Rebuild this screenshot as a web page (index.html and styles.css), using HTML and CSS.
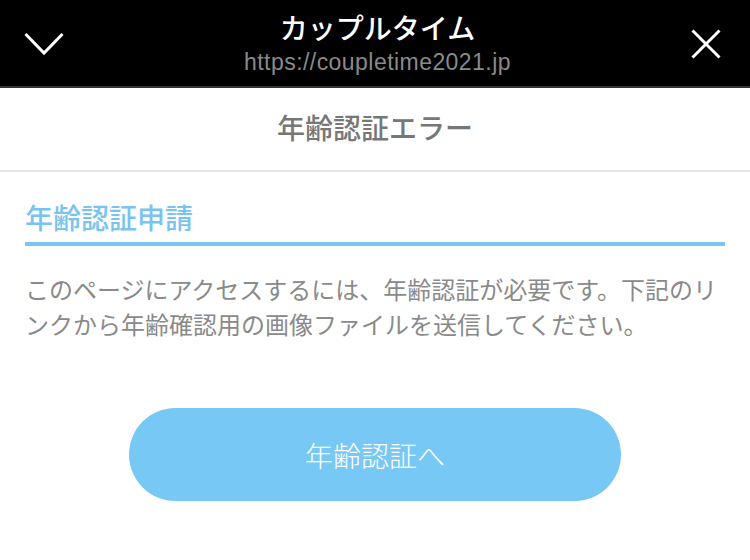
FILE: index.html
```html
<!DOCTYPE html>
<html lang="ja">
<head>
<meta charset="utf-8">
<link rel="stylesheet" href="styles.css">
</head>
<body>
<header class="topbar">
  <button class="icon-btn" aria-label="close down">
    <svg width="40" height="24" viewBox="0 0 40 24"><polyline points="1.5,2 20,21 38.5,2" fill="none" stroke="#fff" stroke-width="3" stroke-linecap="butt"/></svg>
  </button>
  <div class="titles">
    <div class="app-title">カップルタイム</div>
    <div class="app-url">https://coupletime2021.jp</div>
  </div>
  <button class="icon-btn" aria-label="close">
    <svg width="30" height="30" viewBox="0 0 30 30"><path d="M1.5 1.5 L28.5 28.5 M28.5 1.5 L1.5 28.5" fill="none" stroke="#fff" stroke-width="3"/></svg>
  </button>
</header>
<nav class="navbar">年齢認証エラー</nav>
<main class="content">
  <h2 class="section-title">年齢認証申請</h2>
  <p class="desc">このページにアクセスするには、年齢認証が必要です。下記のリンクから年齢確認用の画像ファイルを送信してください。</p>
  <div class="actions">
    <a class="primary-btn">年齢認証へ</a>
  </div>
</main>
</body>
</html>
```
FILE: styles.css
```css
* { box-sizing: border-box; }
html, body { margin: 0; padding: 0; background: #fff; }
body {
  width: 750px;
  font-family: "Noto Sans CJK JP", "Noto Sans", sans-serif;
}
.topbar {
  height: 88px;
  background: #000;
  border-bottom: 2px solid #333;
  display: flex;
  align-items: center;
  justify-content: space-between;
  padding: 0 29px 0 24px;
}
.icon-btn {
  background: none;
  border: 0;
  padding: 0;
  display: flex;
  margin-top: 1px;
}
.titles {
  display: flex;
  flex-direction: column;
  align-items: center;
  margin-top: 2px;
}
.app-title {
  color: #fff;
  font-size: 28px;
  font-weight: 500;
  line-height: 34px;
  margin-bottom: 2px;
}
.app-url {
  color: #8a8a8a;
  font-family: "Liberation Sans", Arial, sans-serif;
  font-size: 23px;
  letter-spacing: 0.45px;
  line-height: 32px;
}
.navbar {
  height: 84px;
  border-bottom: 2px solid #e6e6e6;
  display: flex;
  align-items: center;
  justify-content: center;
  color: #777;
  font-size: 28px;
  font-weight: 500;
  padding-bottom: 4px;
}
.content {
  padding: 0 25px;
}
.section-title {
  margin: 0;
  padding-top: 25px;
  padding-bottom: 5px;
  color: #79c4ee;
  font-size: 28px;
  font-weight: 500;
  line-height: 40px;
  border-bottom: 4px solid #7ac6f1;
}
.desc {
  margin: 25px 0 0;
  color: #8a8a8a;
  font-size: 24px;
  line-height: 35px;
}
.actions {
  display: flex;
  justify-content: center;
  margin-top: 67px;
}
.primary-btn {
  width: 492px;
  height: 93px;
  border-radius: 47px;
  background: #78c8f5;
  color: #fff;
  font-size: 28px;
  font-weight: 300;
  display: flex;
  align-items: center;
  justify-content: center;
}
```
